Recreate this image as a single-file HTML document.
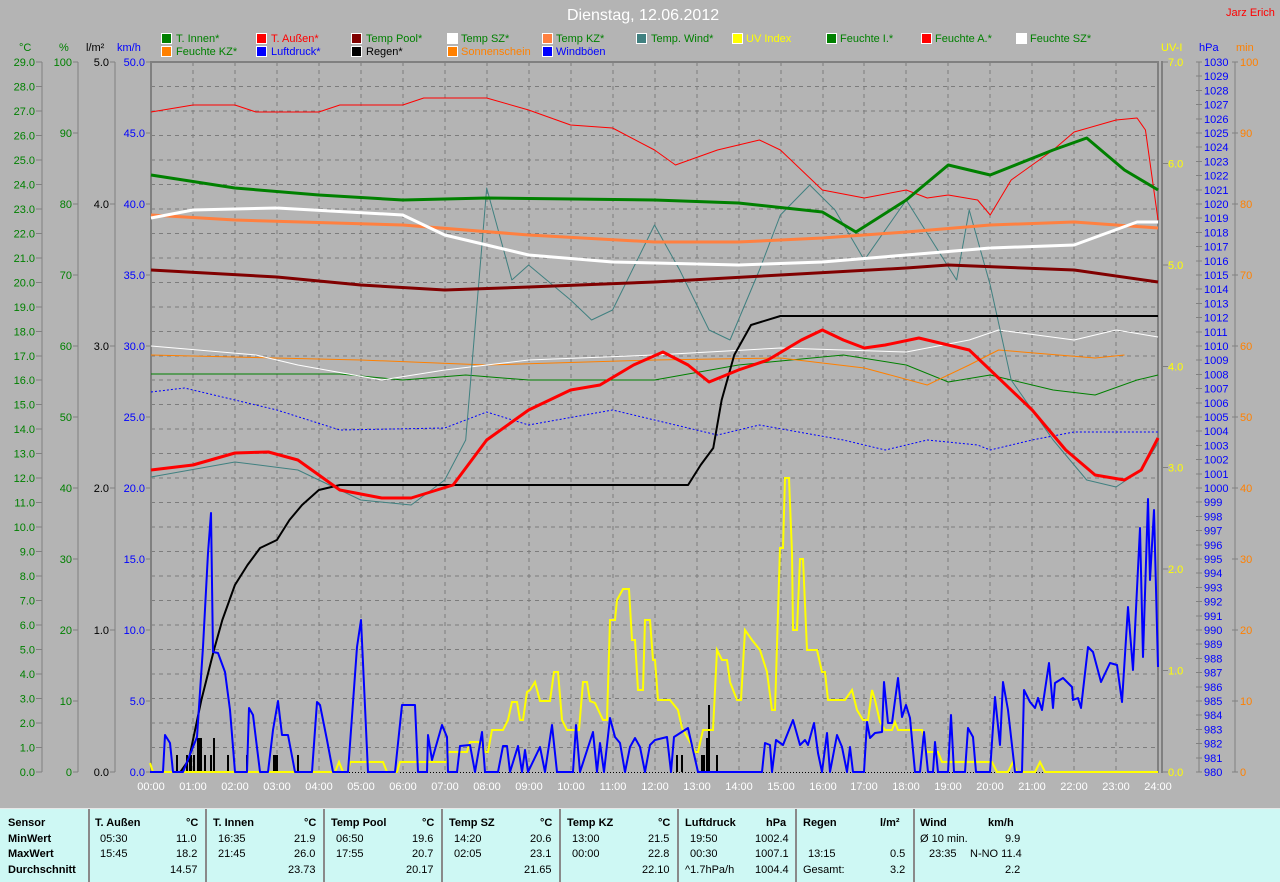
<!DOCTYPE html>
<html><head><meta charset="utf-8"><style>
html,body{margin:0;padding:0;background:#b4b4b4;}
body{width:1280px;height:881px;overflow:hidden;position:relative;font-family:"Liberation Sans",sans-serif;}
svg{position:absolute;left:0;top:0;}
svg text{font-family:"Liberation Sans",sans-serif;font-size:11px;}
#tbl{position:absolute;left:0;top:808px;width:1280px;height:73px;background:#cef8f4;border-top:1px solid #e8e8e8;font-size:11px;}
.c{position:absolute;top:0;height:73px;border-left:2px solid #8a8a8a;}
.t{position:absolute;white-space:nowrap;}
.b{font-weight:bold;}
</style></head><body>
<svg width="1280" height="808" viewBox="0 0 1280 808">
<text x="567" y="20" fill="#fff" style="font-size:16px">Dienstag, 12.06.2012</text>
<text x="1226" y="16" fill="#ff0000">Jarz Erich</text>
<!-- legend -->
<g stroke="#fff" stroke-width="1">
<rect x="161.5" y="33.5" width="10" height="10" fill="#008000"/>
<rect x="256.5" y="33.5" width="10" height="10" fill="#ff0000"/>
<rect x="351.5" y="33.5" width="10" height="10" fill="#800000"/>
<rect x="447.5" y="33.5" width="10" height="10" fill="#ffffff"/>
<rect x="542.5" y="33.5" width="10" height="10" fill="#ff8040"/>
<rect x="636.5" y="33.5" width="10" height="10" fill="#408080"/>
<rect x="732.5" y="33.5" width="10" height="10" fill="#ffff00"/>
<rect x="826.5" y="33.5" width="10" height="10" fill="#008000"/>
<rect x="921.5" y="33.5" width="10" height="10" fill="#ff0000"/>
<rect x="1016.5" y="33.5" width="10" height="10" fill="#ffffff"/>
<rect x="161.5" y="46.5" width="10" height="10" fill="#ff8000"/>
<rect x="256.5" y="46.5" width="10" height="10" fill="#0000ff"/>
<rect x="351.5" y="46.5" width="10" height="10" fill="#000000"/>
<rect x="447.5" y="46.5" width="10" height="10" fill="#ff8000"/>
<rect x="542.5" y="46.5" width="10" height="10" fill="#0000ff"/>
</g>
<g>
<text x="176" y="42" fill="#008000">T. Innen*</text>
<text x="271" y="42" fill="#ff0000">T. Außen*</text>
<text x="366" y="42" fill="#008000">Temp Pool*</text>
<text x="461" y="42" fill="#008000">Temp SZ*</text>
<text x="556" y="42" fill="#008000">Temp KZ*</text>
<text x="651" y="42" fill="#008000">Temp. Wind*</text>
<text x="746" y="42" fill="#ffff00">UV Index</text>
<text x="840" y="42" fill="#008000">Feuchte I.*</text>
<text x="935" y="42" fill="#008000">Feuchte A.*</text>
<text x="1030" y="42" fill="#008000">Feuchte SZ*</text>
<text x="176" y="55" fill="#008000">Feuchte KZ*</text>
<text x="271" y="55" fill="#0000ff">Luftdruck*</text>
<text x="366" y="55" fill="#000000">Regen*</text>
<text x="461" y="55" fill="#ff8000">Sonnenschein</text>
<text x="556" y="55" fill="#0000ff">Windböen</text>
</g>
<!-- axis titles -->
<text x="19" y="51" fill="#008000">°C</text>
<text x="59" y="51" fill="#008000">%</text>
<text x="86" y="51" fill="#000">l/m²</text>
<text x="117" y="51" fill="#0000ff">km/h</text>
<text x="1161" y="51" fill="#ffff00">UV-I</text>
<text x="1199" y="51" fill="#0000ff">hPa</text>
<text x="1236" y="51" fill="#ff8000">min</text>
<!-- grid -->
<g stroke="#7c7c7c" stroke-dasharray="4,4" stroke-width="1" shape-rendering="crispEdges">
<path d="M151 86.5H1158M151 111H1158M151 135.4H1158M151 159.9H1158M151 184.4H1158M151 208.9H1158M151 233.4H1158M151 257.8H1158M151 282.3H1158M151 306.8H1158M151 331.3H1158M151 355.8H1158M151 380.2H1158M151 404.7H1158M151 429.2H1158M151 453.7H1158M151 478.2H1158M151 502.6H1158M151 527.1H1158M151 551.6H1158M151 576.1H1158M151 600.6H1158M151 625H1158M151 649.5H1158M151 674H1158M151 698.5H1158M151 723H1158M151 747.5H1158"/>
<path d="M193 62V772M235 62V772M277 62V772M319 62V772M361 62V772M403 62V772M445 62V772M487 62V772M529 62V772M571 62V772M613 62V772M655 62V772M697 62V772M739 62V772M781 62V772M823 62V772M864 62V772M906 62V772M948 62V772M990 62V772M1032 62V772M1074 62V772M1116 62V772"/>
</g>
<path d="M151 772.5H1158" stroke="#000" stroke-dasharray="1,2" shape-rendering="crispEdges"/>
<!-- frame -->
<g stroke="#808080" stroke-width="2" fill="none" shape-rendering="crispEdges">
<path d="M151 62H1159M151 61V773M1158 61V773M1162 61V773"/>
<path d="M42 62V772M78 62V772M115 62V772M1199 62V772M1235 62V772" stroke-width="1"/>
</g>
<!-- left axis ticks -->
<g stroke="#808080" shape-rendering="crispEdges">
<path d="M36 62H42M36 86.5H42M36 111H42M36 135.4H42M36 159.9H42M36 184.4H42M36 208.9H42M36 233.4H42M36 257.8H42M36 282.3H42M36 306.8H42M36 331.3H42M36 355.8H42M36 380.2H42M36 404.7H42M36 429.2H42M36 453.7H42M36 478.2H42M36 502.6H42M36 527.1H42M36 551.6H42M36 576.1H42M36 600.6H42M36 625H42M36 649.5H42M36 674H42M36 698.5H42M36 723H42M36 747.5H42M36 772H42"/>
<path d="M73 62H78M73 133H78M73 204H78M73 275H78M73 346H78M73 417H78M73 488H78M73 559H78M73 630H78M73 701H78M73 772H78"/>
<path d="M110 62H115M110 204H115M110 346H115M110 488H115M110 630H115M110 772H115"/>
<path d="M146 62H151M146 133H151M146 204H151M146 275H151M146 346H151M146 417H151M146 488H151M146 559H151M146 630H151M146 701H151M146 772H151"/>
<path d="M1162 62H1168M1162 163.4H1168M1162 264.9H1168M1162 366.3H1168M1162 467.7H1168M1162 569.1H1168M1162 670.6H1168M1162 772H1168"/>
<path d="M1232 62H1238M1232 133H1238M1232 204H1238M1232 275H1238M1232 346H1238M1232 417H1238M1232 488H1238M1232 559H1238M1232 630H1238M1232 701H1238M1232 772H1238"/>
</g>
<g fill="#008000" text-anchor="end">
<text x="35" y="66">29.0</text><text x="35" y="90.5">28.0</text><text x="35" y="115">27.0</text><text x="35" y="139.4">26.0</text><text x="35" y="163.9">25.0</text><text x="35" y="188.4">24.0</text><text x="35" y="212.9">23.0</text><text x="35" y="237.4">22.0</text><text x="35" y="261.8">21.0</text><text x="35" y="286.3">20.0</text><text x="35" y="310.8">19.0</text><text x="35" y="335.3">18.0</text><text x="35" y="359.8">17.0</text><text x="35" y="384.2">16.0</text><text x="35" y="408.7">15.0</text><text x="35" y="433.2">14.0</text><text x="35" y="457.7">13.0</text><text x="35" y="482.2">12.0</text><text x="35" y="506.6">11.0</text><text x="35" y="531.1">10.0</text><text x="35" y="555.6">9.0</text><text x="35" y="580.1">8.0</text><text x="35" y="604.6">7.0</text><text x="35" y="629">6.0</text><text x="35" y="653.5">5.0</text><text x="35" y="678">4.0</text><text x="35" y="702.5">3.0</text><text x="35" y="727">2.0</text><text x="35" y="751.5">1.0</text><text x="35" y="776">0.0</text>
<text x="72" y="66">100</text><text x="72" y="137">90</text><text x="72" y="208">80</text><text x="72" y="279">70</text><text x="72" y="350">60</text><text x="72" y="421">50</text><text x="72" y="492">40</text><text x="72" y="563">30</text><text x="72" y="634">20</text><text x="72" y="705">10</text><text x="72" y="776">0</text>
</g>
<g fill="#000" text-anchor="end">
<text x="109" y="66">5.0</text><text x="109" y="208">4.0</text><text x="109" y="350">3.0</text><text x="109" y="492">2.0</text><text x="109" y="634">1.0</text><text x="109" y="776">0.0</text>
</g>
<g fill="#0000ff" text-anchor="end">
<text x="145" y="66">50.0</text><text x="145" y="137">45.0</text><text x="145" y="208">40.0</text><text x="145" y="279">35.0</text><text x="145" y="350">30.0</text><text x="145" y="421">25.0</text><text x="145" y="492">20.0</text><text x="145" y="563">15.0</text><text x="145" y="634">10.0</text><text x="145" y="705">5.0</text><text x="145" y="776">0.0</text>
</g>
<g fill="#ffff00">
<text x="1168" y="66">7.0</text><text x="1168" y="167.4">6.0</text><text x="1168" y="268.9">5.0</text><text x="1168" y="370.3">4.0</text><text x="1168" y="471.7">3.0</text><text x="1168" y="573.1">2.0</text><text x="1168" y="674.6">1.0</text><text x="1168" y="776">0.0</text>
</g>
<g fill="#ff8000">
<text x="1240" y="66">100</text><text x="1240" y="137">90</text><text x="1240" y="208">80</text><text x="1240" y="279">70</text><text x="1240" y="350">60</text><text x="1240" y="421">50</text><text x="1240" y="492">40</text><text x="1240" y="563">30</text><text x="1240" y="634">20</text><text x="1240" y="705">10</text><text x="1240" y="776">0</text>
</g>
<g stroke="#808080" shape-rendering="crispEdges">
<path d="M1196 62H1202M1196 76.2H1202M1196 90.4H1202M1196 104.6H1202M1196 118.8H1202M1196 133H1202M1196 147.2H1202M1196 161.4H1202M1196 175.6H1202M1196 189.8H1202M1196 204H1202M1196 218.2H1202M1196 232.4H1202M1196 246.6H1202M1196 260.8H1202M1196 275H1202M1196 289.2H1202M1196 303.4H1202M1196 317.6H1202M1196 331.8H1202M1196 346H1202M1196 360.2H1202M1196 374.4H1202M1196 388.6H1202M1196 402.8H1202M1196 417H1202M1196 431.2H1202M1196 445.4H1202M1196 459.6H1202M1196 473.8H1202M1196 488H1202M1196 502.2H1202M1196 516.4H1202M1196 530.6H1202M1196 544.8H1202M1196 559H1202M1196 573.2H1202M1196 587.4H1202M1196 601.6H1202M1196 615.8H1202M1196 630H1202M1196 644.2H1202M1196 658.4H1202M1196 672.6H1202M1196 686.8H1202M1196 701H1202M1196 715.2H1202M1196 729.4H1202M1196 743.6H1202M1196 757.8H1202M1196 772H1202"/>
</g>
<g fill="#0000ff">
<text x="1204" y="66">1030</text><text x="1204" y="80.2">1029</text><text x="1204" y="94.4">1028</text><text x="1204" y="108.6">1027</text><text x="1204" y="122.8">1026</text><text x="1204" y="137">1025</text><text x="1204" y="151.2">1024</text><text x="1204" y="165.4">1023</text><text x="1204" y="179.6">1022</text><text x="1204" y="193.8">1021</text><text x="1204" y="208">1020</text><text x="1204" y="222.2">1019</text><text x="1204" y="236.4">1018</text><text x="1204" y="250.6">1017</text><text x="1204" y="264.8">1016</text><text x="1204" y="279">1015</text><text x="1204" y="293.2">1014</text><text x="1204" y="307.4">1013</text><text x="1204" y="321.6">1012</text><text x="1204" y="335.8">1011</text><text x="1204" y="350">1010</text><text x="1204" y="364.2">1009</text><text x="1204" y="378.4">1008</text><text x="1204" y="392.6">1007</text><text x="1204" y="406.8">1006</text><text x="1204" y="421">1005</text><text x="1204" y="435.2">1004</text><text x="1204" y="449.4">1003</text><text x="1204" y="463.6">1002</text><text x="1204" y="477.8">1001</text><text x="1204" y="492">1000</text><text x="1204" y="506.2">999</text><text x="1204" y="520.4">998</text><text x="1204" y="534.6">997</text><text x="1204" y="548.8">996</text><text x="1204" y="563">995</text><text x="1204" y="577.2">994</text><text x="1204" y="591.4">993</text><text x="1204" y="605.6">992</text><text x="1204" y="619.8">991</text><text x="1204" y="634">990</text><text x="1204" y="648.2">989</text><text x="1204" y="662.4">988</text><text x="1204" y="676.6">987</text><text x="1204" y="690.8">986</text><text x="1204" y="705">985</text><text x="1204" y="719.2">984</text><text x="1204" y="733.4">983</text><text x="1204" y="747.6">982</text><text x="1204" y="761.8">981</text><text x="1204" y="776">980</text>
</g>
<!-- time labels -->
<g fill="#fff" text-anchor="middle">
<text x="151" y="790">00:00</text><text x="193" y="790">01:00</text><text x="235" y="790">02:00</text><text x="277" y="790">03:00</text><text x="319" y="790">04:00</text><text x="361" y="790">05:00</text><text x="403" y="790">06:00</text><text x="445" y="790">07:00</text><text x="487" y="790">08:00</text><text x="529" y="790">09:00</text><text x="571" y="790">10:00</text><text x="613" y="790">11:00</text><text x="655" y="790">12:00</text><text x="697" y="790">13:00</text><text x="739" y="790">14:00</text><text x="781" y="790">15:00</text><text x="823" y="790">16:00</text><text x="864" y="790">17:00</text><text x="906" y="790">18:00</text><text x="948" y="790">19:00</text><text x="990" y="790">20:00</text><text x="1032" y="790">21:00</text><text x="1074" y="790">22:00</text><text x="1116" y="790">23:00</text><text x="1158" y="790">24:00</text>
</g>
<!-- data series in hour coords -->
<g transform="translate(151,0) scale(41.96,1)" fill="none" stroke-linejoin="round">
<polyline vector-effect="non-scaling-stroke" stroke="#0000ff" stroke-width="1" stroke-dasharray="2,2" points="0,392 0.8,388 3,410 4.5,430 7,428 8,412 9,425 11,410 12,420 13.5,435 14.5,425 16.5,440 17.5,450 18.5,440 19.7,445 20,450 21,440 22,432 24,432"/>
<polyline vector-effect="non-scaling-stroke" stroke="#008000" stroke-width="1" points="0,374 4.5,374 6,380 7.5,375 9,380 12,380 14,365 16.5,355 18,365 19,382 20,375 21.5,390 22.5,395 23.5,380 24,375"/>
<polyline vector-effect="non-scaling-stroke" stroke="#ff8000" stroke-width="1" points="0,355 5,360 8,365 12,360 15,358 17,368 18.5,385 19.5,365 20.2,350 22.5,358 23.2,355"/>
<polyline vector-effect="non-scaling-stroke" stroke="#fff" stroke-width="1" points="0,346 2.5,355 3.5,365 5.5,380 7,370 9,360 12,355 15,348 18,352 19.5,340 20.2,330 22,340 23,330 24,337"/>
<polyline vector-effect="non-scaling-stroke" stroke="#ff0000" stroke-width="1" points="0,112 1,105 2,105 2.5,112 4,112 4.5,105 6,105 6.5,98 8,98 9,110 10,125 11,128 12,150 12.5,165 13.5,150 14.5,140 15,150 16,190 17,198 18,190 18.5,198 19,195 19.7,200 20,215 20.5,180 21.5,150 22,132 23,120 23.5,118 23.7,130 24,220"/>
<polyline vector-effect="non-scaling-stroke" stroke="#408080" stroke-width="1" points="0,477 2,462 3.5,470 5,500 6.2,505 7,480 7.5,440 8,188 8.6,280 9,265 10,300 10.5,320 11,310 12,225 12.6,270 13.3,330 13.8,340 14.5,270 15,215 15.7,185 16.3,210 17,260 18,200 18.6,240 19.2,280 19.5,210 20,285 20.5,380 21.5,440 22.3,480 23,487 23.6,470 24,443"/>
<polyline vector-effect="non-scaling-stroke" stroke="#800000" stroke-width="3" points="0,270 3,277 5,285 7,290 9,287 12,282 15,275 18,268 19,265 22,270 24,282"/>
<polyline vector-effect="non-scaling-stroke" stroke="#ff8040" stroke-width="3" points="0,215 2,220 6,225 9,235 12,242 14,242 16,238 18,232 20,225 22,222 24,228"/>
<polyline vector-effect="non-scaling-stroke" stroke="#fff" stroke-width="3" points="0,218 1,210 3,208 6,215 7,235 9,255 11,262 14,265 16,262 18,255 20,248 22,245 23.5,222 24,222"/>
<polyline vector-effect="non-scaling-stroke" stroke="#008000" stroke-width="3" points="0,175 2,188 4,195 6,200 8,198 12,200 14,203 16,212 16.8,232 18,200 19,165 20,175 21.5,150 22.3,138 23.2,170 24,190"/>
<polyline vector-effect="non-scaling-stroke" stroke="#000" stroke-width="2" points="0,772 0.7,772 0.9,760 1.2,700 1.5,650 1.7,620 2,585 2.3,565 2.6,548 3,540 3.3,520 3.6,505 4,490 4.5,485 12.8,485 13.1,465 13.4,448 13.6,400 13.9,355 14.3,325 15,316 24,316"/>
<polyline vector-effect="non-scaling-stroke" stroke="#ff0000" stroke-width="3" points="0,470 1,465 2,453 2.8,452 3.5,460 4.5,490 5.5,498 6.2,498 7.2,485 8,440 9,410 10,390 10.7,385 11.5,365 12.2,352 12.8,365 13.3,382 14,370 14.7,360 15.5,340 16,330 16.5,340 17,348 17.5,345 18.3,338 19,345 19.5,350 20.2,378 21,410 21.8,450 22.5,475 23.2,480 23.6,470 24,438"/>
</g>
<!-- rain bars -->
<g fill="#000">
<rect x="176" y="755" width="2" height="17"/><rect x="186" y="755" width="2" height="17"/><rect x="189" y="755" width="3" height="17"/><rect x="193" y="755" width="2" height="17"/><rect x="197" y="738" width="5" height="34"/><rect x="204" y="755" width="2" height="17"/><rect x="210" y="755" width="2" height="17"/><rect x="213" y="738" width="2" height="34"/><rect x="227" y="755" width="2" height="17"/><rect x="246" y="755" width="2" height="17"/><rect x="273" y="755" width="5" height="17"/><rect x="297" y="755" width="2" height="17"/><rect x="676" y="755" width="2" height="17"/><rect x="681" y="755" width="2" height="17"/><rect x="701" y="755" width="4" height="17"/><rect x="706" y="738" width="2" height="34"/><rect x="708" y="705" width="2" height="67"/><rect x="716" y="755" width="2" height="17"/>
</g>
<!-- UV -->
<polyline fill="none" stroke="#ffff00" stroke-width="2" points="150,763 153,772 335,772 339,762 343,772 348,772 350,762 383,762 387,772 397,772 400,762 447,762 448,752 467,752 470,742 482,742 485,752 488,752 492,730 503,730 508,720 512,702 517,702 520,720 523,720 527,692 530,690 535,682 540,701 550,701 554,672 558,672 562,720 567,730 579,730 583,682 587,682 590,701 595,703 603,720 607,720 610,620 615,620 617,600 623,589 629,589 632,640 635,640 638,690 643,690 645,620 650,620 653,660 655,660 658,700 670,700 678,710 682,728 690,742 695,752 698,752 703,730 713,730 717,650 722,660 727,660 730,682 737,700 741,700 745,630 752,640 760,650 767,672 772,710 775,710 780,548 783,548 785,478 789,478 792,553 793,630 797,630 800,559 803,559 807,650 817,650 822,672 825,672 828,700 845,700 852,690 857,710 863,720 868,720 872,690 875,700 880,722 885,730 892,730 895,722 898,730 922,730 927,752 938,752 942,762 992,762 997,772 1008,772 1013,762 1017,772 1035,772 1040,762 1045,772 1158,772"/>
<!-- Wind gusts -->
<polyline fill="none" stroke="#0000ff" stroke-width="2" stroke-linejoin="round" points="150,772 163,772 165,735 170,743 173,772 183,772 197,737 203,647 208,553 211,513 213,652 218,653 225,672 230,710 235,772 247,772 249,708 253,715 260,772 268,772 273,730 278,701 282,735 288,735 295,772 312,772 317,702 320,705 327,740 333,772 348,772 357,647 361,620 363,663 368,772 395,772 402,705 415,705 418,772 427,772 428,735 432,760 442,725 447,737 448,772 457,772 460,746 470,745 475,772 482,732 485,772 498,772 503,746 507,746 510,772 518,746 522,772 525,750 528,772 540,747 545,772 552,725 557,772 573,772 576,725 580,772 593,732 597,772 600,743 604,772 610,718 615,737 620,743 625,772 630,747 635,738 640,747 645,772 650,745 655,740 667,737 671,772 674,737 688,728 698,772 762,772 765,743 770,745 772,772 776,740 783,745 793,720 800,745 805,740 808,745 814,723 818,753 822,772 827,733 830,772 837,735 842,747 847,772 850,747 853,772 864,772 867,722 870,738 875,733 882,732 884,682 888,723 892,723 898,678 902,717 906,705 910,718 915,772 920,772 924,732 928,772 933,772 935,742 938,772 948,772 951,715 954,772 965,772 968,728 973,737 976,772 990,772 995,697 1000,745 1003,682 1008,710 1015,772 1022,772 1024,690 1030,702 1035,708 1038,698 1042,710 1049,663 1053,708 1055,683 1063,678 1072,687 1073,700 1078,698 1081,708 1088,647 1093,652 1101,682 1110,663 1117,665 1122,702 1128,607 1133,670 1140,528 1143,657 1148,499 1150,580 1154,510 1158,667"/>
</svg>
<div id="tbl">
<div class="c" style="left:88px"></div><div class="c" style="left:205px"></div><div class="c" style="left:323px"></div><div class="c" style="left:441px"></div><div class="c" style="left:559px"></div><div class="c" style="left:677px"></div><div class="c" style="left:795px"></div><div class="c" style="left:913px"></div>
<div class="t b" style="left:8px;top:8px">Sensor</div>
<div class="t b" style="left:8px;top:24px">MinWert</div>
<div class="t b" style="left:8px;top:39px">MaxWert</div>
<div class="t b" style="left:8px;top:55px">Durchschnitt</div>
<div class="t b" style="left:95px;top:8px">T. Außen</div><div class="t b" style="left:186px;top:8px">°C</div>
<div class="t" style="left:100px;top:24px">05:30</div><div class="t" style="left:176px;top:24px">11.0</div>
<div class="t" style="left:100px;top:39px">15:45</div><div class="t" style="left:176px;top:39px">18.2</div>
<div class="t" style="left:170px;top:55px">14.57</div>
<div class="t b" style="left:213px;top:8px">T. Innen</div><div class="t b" style="left:304px;top:8px">°C</div>
<div class="t" style="left:218px;top:24px">16:35</div><div class="t" style="left:294px;top:24px">21.9</div>
<div class="t" style="left:218px;top:39px">21:45</div><div class="t" style="left:294px;top:39px">26.0</div>
<div class="t" style="left:288px;top:55px">23.73</div>
<div class="t b" style="left:331px;top:8px">Temp Pool</div><div class="t b" style="left:422px;top:8px">°C</div>
<div class="t" style="left:336px;top:24px">06:50</div><div class="t" style="left:412px;top:24px">19.6</div>
<div class="t" style="left:336px;top:39px">17:55</div><div class="t" style="left:412px;top:39px">20.7</div>
<div class="t" style="left:406px;top:55px">20.17</div>
<div class="t b" style="left:449px;top:8px">Temp SZ</div><div class="t b" style="left:540px;top:8px">°C</div>
<div class="t" style="left:454px;top:24px">14:20</div><div class="t" style="left:530px;top:24px">20.6</div>
<div class="t" style="left:454px;top:39px">02:05</div><div class="t" style="left:530px;top:39px">23.1</div>
<div class="t" style="left:524px;top:55px">21.65</div>
<div class="t b" style="left:567px;top:8px">Temp KZ</div><div class="t b" style="left:658px;top:8px">°C</div>
<div class="t" style="left:572px;top:24px">13:00</div><div class="t" style="left:648px;top:24px">21.5</div>
<div class="t" style="left:572px;top:39px">00:00</div><div class="t" style="left:648px;top:39px">22.8</div>
<div class="t" style="left:642px;top:55px">22.10</div>
<div class="t b" style="left:685px;top:8px">Luftdruck</div><div class="t b" style="left:766px;top:8px">hPa</div>
<div class="t" style="left:690px;top:24px">19:50</div><div class="t" style="left:755px;top:24px">1002.4</div>
<div class="t" style="left:690px;top:39px">00:30</div><div class="t" style="left:755px;top:39px">1007.1</div>
<div class="t" style="left:685px;top:55px">^1.7hPa/h</div><div class="t" style="left:755px;top:55px">1004.4</div>
<div class="t b" style="left:803px;top:8px">Regen</div><div class="t b" style="left:880px;top:8px">l/m²</div>
<div class="t" style="left:808px;top:39px">13:15</div><div class="t" style="left:890px;top:39px">0.5</div>
<div class="t" style="left:803px;top:55px">Gesamt:</div><div class="t" style="left:890px;top:55px">3.2</div>
<div class="t b" style="left:920px;top:8px">Wind</div><div class="t b" style="left:988px;top:8px">km/h</div>
<div class="t" style="left:920px;top:24px">Ø 10 min.</div><div class="t" style="left:1005px;top:24px">9.9</div>
<div class="t" style="left:929px;top:39px">23:35</div><div class="t" style="left:970px;top:39px">N-NO 11.4</div>
<div class="t" style="left:1005px;top:55px">2.2</div>
</div>
</body></html>
